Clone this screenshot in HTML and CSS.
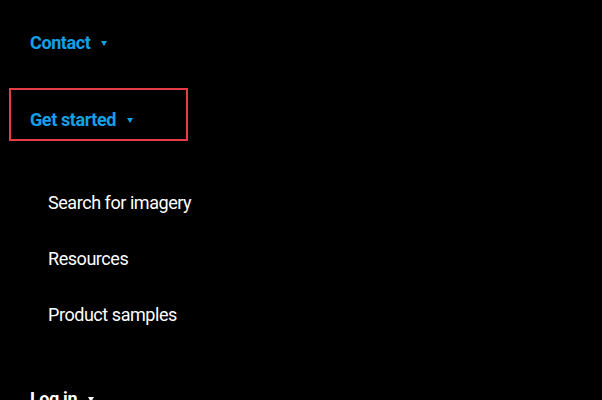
FILE: index.html
```html
<!DOCTYPE html>
<html lang="en">
<head>
<meta charset="utf-8">
<title>Menu</title>
<link rel="stylesheet" href="styles.css">
</head>
<body>
<nav class="menu">
  <ul class="menu-list">
    <li class="menu-item">
      <a class="menu-link" href="#">Contact<span class="caret"></span></a>
    </li>
    <li class="menu-item">
      <a class="menu-link is-focused" href="#">Get started<span class="caret"></span></a>
      <ul class="sub-list">
        <li><a class="sub-link" href="#">Search for imagery</a></li>
        <li><a class="sub-link" href="#">Resources</a></li>
        <li><a class="sub-link" href="#">Product samples</a></li>
      </ul>
    </li>
    <li class="menu-item">
      <a class="menu-link is-light" href="#">Log in<span class="caret"></span></a>
    </li>
  </ul>
</nav>
</body>
</html>
```
FILE: styles.css
```css
html, body {
  margin: 0;
  padding: 0;
  background: #000;
  height: 100%;
  overflow: hidden;
}
body {
  font-family: Roboto, "Noto Sans", sans-serif;
}
.menu-list, .sub-list {
  list-style: none;
  margin: 0;
  padding: 0;
}
.menu-list {
  display: flex;
  flex-direction: column;
  gap: 24px;
  padding-top: 11px;
}
.menu-link {
  box-sizing: border-box;
  display: flex;
  align-items: center;
  width: 179px;
  height: 53px;
  margin-left: 9px;
  padding: 20px 0 9px 19px;
  font-size: 18px;
  line-height: 24px;
  font-weight: 700;
  color: #14a0e8;
  text-decoration: none;
  letter-spacing: -0.4px;
  border: 2px solid transparent;
}
.menu-link.is-focused {
  border-color: #e63c45;
}
.menu-link.is-light {
  color: #fff;
}
.caret {
  display: inline-block;
  margin-left: 11px;
  margin-top: 1px;
  width: 0;
  height: 0;
  border-left: 3px solid transparent;
  border-right: 3px solid transparent;
  border-top: 5px solid currentColor;
}
.sub-list {
  padding-top: 34px;
}
.sub-link {
  display: flex;
  align-items: center;
  height: 56px;
  padding-left: 48px;
  font-size: 18px;
  line-height: 24px;
  color: #fff;
  text-decoration: none;
  letter-spacing: -0.45px;
}
```
